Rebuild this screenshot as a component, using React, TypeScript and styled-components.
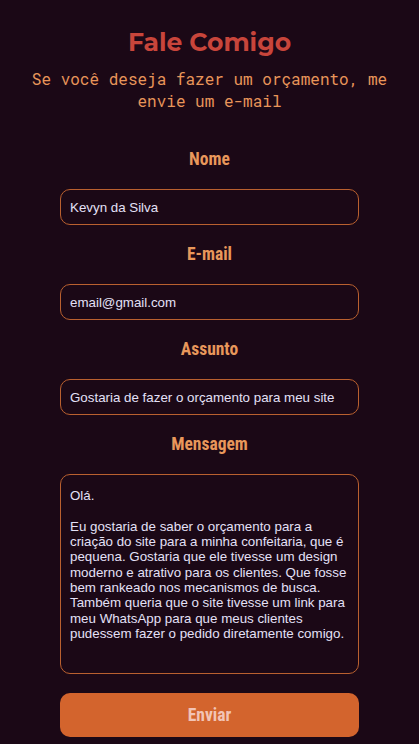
import React from "react";
import styled, { createGlobalStyle } from "styled-components";

const GlobalStyle = createGlobalStyle`
  html, body {
    margin: 0;
    padding: 0;
    background: #1b0816;
  }
  * { box-sizing: border-box; }
`;

const Page = styled.main`
  min-height: 744px;
  background: #1b0816;
  display: flex;
  flex-direction: column;
  align-items: center;
  padding: 27px 16px 0;
`;

const Title = styled.h1`
  margin: 0;
  font-family: "Montserrat", "Open Sans", sans-serif;
  font-weight: 700;
  font-size: 25px;
  line-height: 31px;
  color: #c8453b;
  text-align: center;
`;

const Subtitle = styled.p`
  margin: 10px 0 0;
  font-family: "Roboto Mono", "DejaVu Sans Mono", "Liberation Mono", monospace;
  font-size: 16px;
  line-height: 22px;
  color: #e8955a;
  text-align: center;
`;

const Form = styled.form`
  width: 299px;
  margin-top: 37px;
  display: flex;
  flex-direction: column;
`;

const Field = styled.div`
  display: flex;
  flex-direction: column;
  gap: 19px;
  margin-bottom: 19px;
`;

const Label = styled.label`
  font-family: "Roboto Condensed", "Liberation Sans Narrow", "DejaVu Sans Condensed", "Roboto", sans-serif;
  font-weight: 700;
  font-size: 17.5px;
  line-height: 21px;
  color: #e8975b;
  text-align: center;
`;

const Input = styled.input`
  height: 36px;
  width: 100%;
  padding: 0 9px;
  border: 1px solid #b9602f;
  border-radius: 10px;
  background: #1b0816;
  color: #e4e0f6;
  font-family: "Liberation Sans", Arial, sans-serif;
  font-size: 13.333px;
  outline: none;
`;

const TextArea = styled.textarea`
  height: 200px;
  width: 100%;
  padding: 13px 3px 12px 9px;
  border: 1px solid #b9602f;
  border-radius: 10px;
  background: #1b0816;
  color: #e4e0f6;
  font-family: "Liberation Sans", Arial, sans-serif;
  font-size: 13.333px;
  line-height: 15.33px;
  resize: none;
  outline: none;
  overflow: hidden;
`;

const Button = styled.button`
  height: 44px;
  width: 100%;
  border: none;
  border-radius: 10px;
  background: #d3642d;
  color: #f2c4b6;
  font-family: "Roboto Condensed", "Liberation Sans Narrow", "DejaVu Sans Condensed", "Roboto", sans-serif;
  font-weight: 700;
  font-size: 17.5px;
  cursor: pointer;
`;

const message = `Olá.

Eu gostaria de saber o orçamento para a criação do site para a minha confeitaria, que é pequena. Gostaria que ele tivesse um design moderno e atrativo para os clientes. Que fosse bem rankeado nos mecanismos de busca. Também queria que o site tivesse um link para meu WhatsApp para que meus clientes pudessem fazer o pedido diretamente comigo.`;

const fields = [
  { id: "nome", label: "Nome", value: "Kevyn da Silva" },
  { id: "email", label: "E-mail", value: "email@gmail.com" },
  { id: "assunto", label: "Assunto", value: "Gostaria de fazer o orçamento para meu site" },
];

export default function App() {
  return (
    <>
      <GlobalStyle />
      <Page>
        <Title>Fale Comigo</Title>
        <Subtitle>
          Se você deseja fazer um orçamento, me
          <br />
          envie um e-mail
        </Subtitle>
        <Form onSubmit={(e) => e.preventDefault()}>
          {fields.map((f) => (
            <Field key={f.id}>
              <Label htmlFor={f.id}>{f.label}</Label>
              <Input id={f.id} defaultValue={f.value} />
            </Field>
          ))}
          <Field>
            <Label htmlFor="mensagem">Mensagem</Label>
            <TextArea id="mensagem" defaultValue={message} />
          </Field>
          <Button type="submit">Enviar</Button>
        </Form>
      </Page>
    </>
  );
}
